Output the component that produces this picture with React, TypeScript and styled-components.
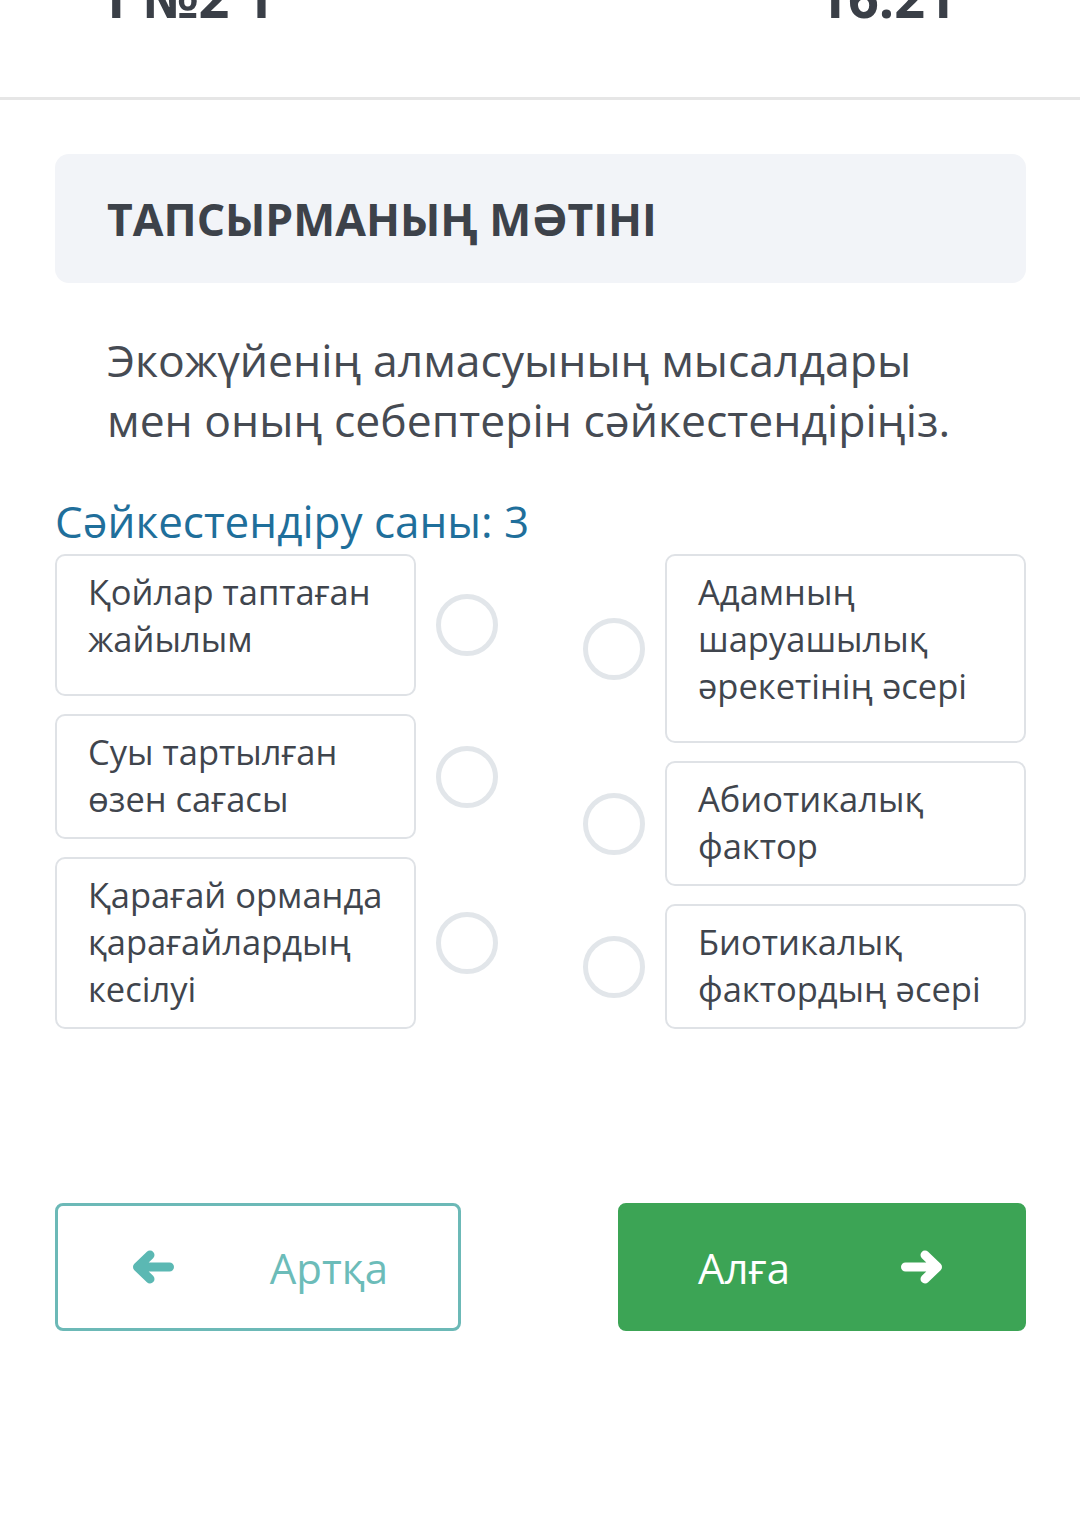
import React from "react";
import styled, { createGlobalStyle } from "styled-components";

const GlobalStyle = createGlobalStyle`
    body {
        margin: 0;
        background: #ffffff;
        font-family: "Open Sans", "Noto Sans", sans-serif;
    }
`;

const Header = styled.header`
    display: flex;
    justify-content: space-between;
    align-items: flex-start;
    height: 97px;
    padding: 0 124px 0 98px;
    border-bottom: 3px solid #e6e6e6;
    overflow: hidden;
`;

const HeaderText = styled.span`
    margin-top: -30px;
    font-size: 54px;
    font-weight: 700;
    line-height: 1;
    color: #3a3f47;
`;

const Main = styled.main`
    padding: 54px 54px 0 55px;
`;

const TitleCard = styled.div`
    display: flex;
    align-items: center;
    height: 129px;
    padding: 0 52px;
    border-radius: 14px;
    background-color: #f2f4f8;
    h1 {
        margin: 0;
        font-size: 44.5px;
        font-weight: 700;
        color: #3d424a;
    }
`;

const Question = styled.p`
    margin: 47px 0 0;
    padding-left: 52px;
    font-size: 44.5px;
    line-height: 60px;
    color: #464b53;
`;

const CountLabel = styled.div`
    margin-top: 46px;
    font-size: 44px;
    line-height: 50px;
    color: #1f6f9b;
`;

const Matching = styled.div`
    display: flex;
    justify-content: space-between;
    margin-top: 8px;
`;

const Column = styled.div`
    display: flex;
    flex-direction: column;
    gap: 18px;
`;

const Row = styled.div`
    display: flex;
    align-items: center;
    gap: 20px;
`;

const Option = styled.div<{ $minHeight?: number }>`
    box-sizing: border-box;
    width: 361px;
    min-height: ${(p) => (p.$minHeight ? `${p.$minHeight}px` : "auto")};
    padding: 12px 26px 15px 31px;
    border: 2px solid #dfe2e6;
    border-radius: 10px;
    font-size: 34.5px;
    line-height: 47px;
    color: #40454d;
`;

const Dot = styled.div`
    box-sizing: border-box;
    width: 62px;
    height: 62px;
    border: 5px solid #e2e6ea;
    border-radius: 50%;
`;

const Buttons = styled.div`
    display: flex;
    justify-content: space-between;
    margin-top: 174px;
`;

const NavButton = styled.button<{ $primary?: boolean }>`
    box-sizing: border-box;
    display: flex;
    justify-content: space-between;
    align-items: center;
    width: ${(p) => (p.$primary ? "408px" : "406px")};
    height: 128px;
    padding: ${(p) => (p.$primary ? "0 80px 0 77px" : "0 70px 0 74px")};
    border: 3px solid ${(p) => (p.$primary ? "#3ca455" : "#6cb9b7")};
    border-radius: 8px;
    background-color: ${(p) => (p.$primary ? "#3ca455" : "#ffffff")};
    color: ${(p) => (p.$primary ? "#ffffff" : "#6cbcb9")};
    font-family: "Open Sans", sans-serif;
    font-size: 42px;
    cursor: pointer;
    svg {
        display: block;
        color: ${(p) => (p.$primary ? "#ffffff" : "#5bb8b3")};
    }
`;

const Arrow: React.FC<{ dir: "left" | "right" }> = ({ dir }) => (
    <svg
        width="43"
        height="34"
        viewBox="0 0 43 34"
        fill="none"
        stroke="currentColor"
        strokeWidth="9"
        strokeLinecap="round"
        strokeLinejoin="round"
        style={dir === "right" ? { transform: "scaleX(-1)" } : undefined}
    >
        <path d="M18 5 L5.5 17 L18 29 M5.5 17 H37.5" />
    </svg>
);

const left = [
    { text: "Қойлар таптаған жайылым", minHeight: 142 },
    { text: "Суы тартылған өзен сағасы" },
    { text: "Қарағай орманда қарағайлардың кесілуі" },
];

const right = [
    { text: "Адамның шаруашылық әрекетінің әсері", minHeight: 189 },
    { text: "Абиотикалық фактор" },
    { text: "Биотикалық фактордың әсері" },
];

const App: React.FC = () => {
    return (
        <>
            <GlobalStyle />
            <Header>
                <HeaderText>1 №2 1</HeaderText>
                <HeaderText>16:21</HeaderText>
            </Header>
            <Main>
                <TitleCard>
                    <h1>ТАПСЫРМАНЫҢ МӘТІНІ</h1>
                </TitleCard>
                <Question>
                    Экожүйенің алмасуының мысалдары
                    <br />
                    мен оның себептерін сәйкестендіріңіз.
                </Question>
                <CountLabel>Сәйкестендіру саны: 3</CountLabel>
                <Matching>
                    <Column>
                        {left.map((item) => (
                            <Row key={item.text}>
                                <Option $minHeight={item.minHeight}>{item.text}</Option>
                                <Dot />
                            </Row>
                        ))}
                    </Column>
                    <Column>
                        {right.map((item) => (
                            <Row key={item.text}>
                                <Dot />
                                <Option $minHeight={item.minHeight}>{item.text}</Option>
                            </Row>
                        ))}
                    </Column>
                </Matching>
                <Buttons>
                    <NavButton>
                        <Arrow dir="left" />
                        <span>Артқа</span>
                    </NavButton>
                    <NavButton $primary>
                        <span>Алға</span>
                        <Arrow dir="right" />
                    </NavButton>
                </Buttons>
            </Main>
        </>
    );
};

export default App;
